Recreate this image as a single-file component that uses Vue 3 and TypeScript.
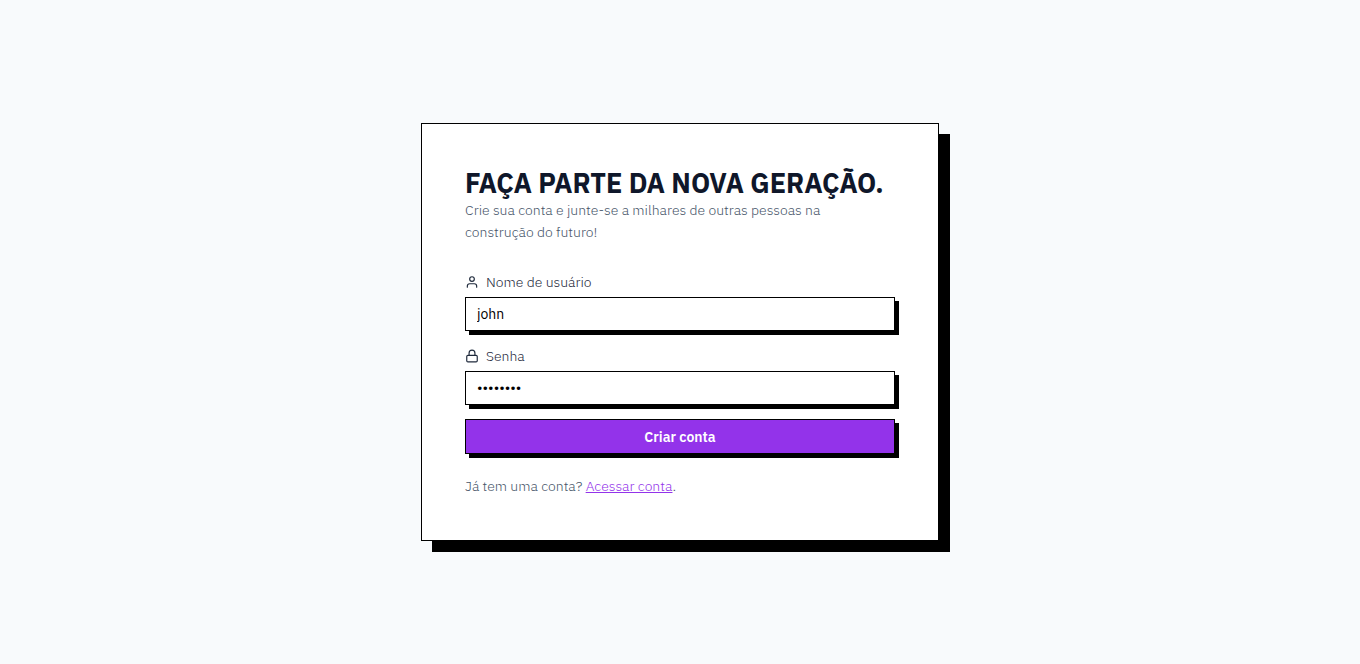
<script setup lang="ts">
import { ref } from 'vue'

const username = ref<string>('john')
const password = ref<string>('password')
</script>

<template>
  <main class="page">
    <section class="card">
      <header class="intro">
        <h1 class="title">FAÇA PARTE DA NOVA GERAÇÃO.</h1>
        <p class="lead">Crie sua conta e junte-se a milhares de outras pessoas na construção do futuro!</p>
      </header>

      <form class="form" @submit.prevent>
        <div class="field">
          <label class="label" for="username">
            <svg class="icon" viewBox="0 0 24 24" aria-hidden="true">
              <circle cx="12" cy="7" r="4" />
              <path d="M20 21v-2a4 4 0 0 0-4-4H8a4 4 0 0 0-4 4v2" />
            </svg>
            Nome de usuário
          </label>
          <input id="username" v-model="username" class="input" type="text" autocomplete="username" />
        </div>
        <div class="field">
          <label class="label" for="password">
            <svg class="icon" viewBox="0 0 24 24" aria-hidden="true">
              <rect x="3" y="11" width="18" height="11" rx="2" />
              <path d="M7 11V7a5 5 0 0 1 10 0v4" />
            </svg>
            Senha
          </label>
          <input id="password" v-model="password" class="input" type="password" autocomplete="new-password" />
        </div>
        <button class="submit" type="submit">Criar conta</button>
      </form>

      <p class="footnote">Já tem uma conta? <a class="link" href="#">Acessar conta</a>.</p>
    </section>
  </main>
</template>

<style>
body {
  background: #f8fafc;
}
</style>

<style scoped>
.page {
  display: flex;
  align-items: center;
  justify-content: center;
  min-height: 100vh;
  font-family: "IBM Plex Sans", Roboto, "Liberation Sans", sans-serif;
  font-size: 14px;
  font-weight: 300;
  line-height: 22px;
  color: #475569;
}

.card {
  box-sizing: border-box;
  width: 100%;
  max-width: 518px;
  padding: 43px;
  background: #fff;
  border: 1px solid #000;
  box-shadow: 11px 11px 0 #000;
}

.title {
  margin: 0;
  font-size: 27px;
  font-weight: 700;
  line-height: 32px;
  color: #0f172a;
}

.lead,
.footnote {
  margin: 0;
}

.lead {
  max-width: 400px;
}

.form {
  display: flex;
  flex-direction: column;
  gap: 14px;
  margin: 28px 0 21px;
}

.field {
  display: flex;
  flex-direction: column;
  gap: 4px;
}

.label {
  display: flex;
  align-items: center;
  gap: 7px;
  color: #1e293b;
}

.icon {
  width: 14px;
  height: 14px;
  fill: none;
  stroke: currentColor;
  stroke-width: 2;
  stroke-linecap: round;
  stroke-linejoin: round;
}

.input,
.submit {
  box-sizing: border-box;
  width: 100%;
  margin: 0;
  font: inherit;
  border: 1px solid #000;
  border-radius: 0;
  box-shadow: 4px 4px 0 #000;
}

.input {
  height: 34px;
  padding: 0 11px;
  font-weight: 400;
  color: #000;
  background: #fff;
  outline: none;
}

.submit {
  height: 35px;
  font-weight: 600;
  color: #fff;
  background: #9333ea;
  cursor: pointer;
}

.link {
  color: #9333ea;
  text-decoration: underline;
}
</style>
